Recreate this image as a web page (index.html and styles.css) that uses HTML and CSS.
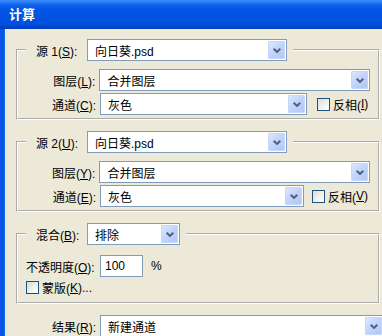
FILE: index.html
```html
<!DOCTYPE html>
<html lang="zh-CN">
<head>
    <meta charset="UTF-8">
    <meta name="viewport" content="width=device-width, initial-scale=1.0">
    <title>计算</title>
    <link rel="stylesheet" href="styles.css">
</head>
<body>

<div class="window">
    <div class="titlebar">计算</div>

    <div class="frame">
        <div class="content">

            <fieldset class="group">
                <legend class="group-head">
                    <span class="head-label">源 1(<u>S</u>):</span>
                    <div class="combo combo-src">
                        <span class="combo-text">向日葵.psd</span>
                        <span class="combo-btn"><svg width="8" height="5" viewBox="0 0 8 5"><polyline points="0.7,0.7 4,4 7.3,0.7" /></svg></span>
                    </div>
                </legend>
                <div class="row">
                    <span class="row-label">图层(<u>L</u>):</span>
                    <div class="combo combo-wide">
                        <span class="combo-text">合并图层</span>
                        <span class="combo-btn"><svg width="8" height="5" viewBox="0 0 8 5"><polyline points="0.7,0.7 4,4 7.3,0.7" /></svg></span>
                    </div>
                </div>
                <div class="row">
                    <span class="row-label">通道(<u>C</u>):</span>
                    <div class="combo combo-chan">
                        <span class="combo-text">灰色</span>
                        <span class="combo-btn"><svg width="8" height="5" viewBox="0 0 8 5"><polyline points="0.7,0.7 4,4 7.3,0.7" /></svg></span>
                    </div>
                    <label class="check check-invert"><span class="check-box"></span>反相(<u>I</u>)</label>
                </div>
            </fieldset>

            <fieldset class="group">
                <legend class="group-head">
                    <span class="head-label">源 2(<u>U</u>):</span>
                    <div class="combo combo-src">
                        <span class="combo-text">向日葵.psd</span>
                        <span class="combo-btn"><svg width="8" height="5" viewBox="0 0 8 5"><polyline points="0.7,0.7 4,4 7.3,0.7" /></svg></span>
                    </div>
                </legend>
                <div class="row">
                    <span class="row-label">图层(<u>Y</u>):</span>
                    <div class="combo combo-wide">
                        <span class="combo-text">合并图层</span>
                        <span class="combo-btn"><svg width="8" height="5" viewBox="0 0 8 5"><polyline points="0.7,0.7 4,4 7.3,0.7" /></svg></span>
                    </div>
                </div>
                <div class="row">
                    <span class="row-label">通道(<u>E</u>):</span>
                    <div class="combo combo-chan2">
                        <span class="combo-text">灰色</span>
                        <span class="combo-btn"><svg width="8" height="5" viewBox="0 0 8 5"><polyline points="0.7,0.7 4,4 7.3,0.7" /></svg></span>
                    </div>
                    <label class="check check-invert2"><span class="check-box"></span>反相(<u>V</u>)</label>
                </div>
            </fieldset>

            <fieldset class="group group-blend">
                <legend class="group-head">
                    <span class="head-label">混合(<u>B</u>):</span>
                    <div class="combo combo-blend">
                        <span class="combo-text">排除</span>
                        <span class="combo-btn"><svg width="8" height="5" viewBox="0 0 8 5"><polyline points="0.7,0.7 4,4 7.3,0.7" /></svg></span>
                    </div>
                </legend>
                <div class="row row-opacity">
                    <span class="row-label row-label-left">不透明度(<u>O</u>):</span>
                    <div class="text-input">100</div>
                    <span class="unit">%</span>
                </div>
                <label class="check check-mask"><span class="check-box"></span>蒙版(<u>K</u>)...</label>
            </fieldset>

            <div class="row row-result">
                <span class="row-label">结果(<u>R</u>):</span>
                <div class="combo combo-result">
                    <span class="combo-text">新建通道</span>
                    <span class="combo-btn"><svg width="8" height="5" viewBox="0 0 8 5"><polyline points="0.7,0.7 4,4 7.3,0.7" /></svg></span>
                </div>
            </div>

        </div>
    </div>
</div>

</body>
</html>
```

FILE: styles.css
```css
body {
    margin: 0;
    padding: 0;
    background-color: #ECE9D8;
    font-family: 'Liberation Sans', 'Noto Sans CJK SC', sans-serif;
    font-size: 12px;
    color: #000;
    overflow: hidden;
}

.window {
    width: 382px;
    height: 336px;
    display: flex;
    flex-direction: column;
    overflow: hidden;
}

.titlebar {
    height: 29px;
    line-height: 29px;
    padding-left: 9px;
    color: #fff;
    font-size: 13px;
    font-weight: bold;
    background: linear-gradient(to bottom, #3a8cf8 0px, #2a7ef6 2px, #0d62ea 5px, #0055e5 9px, #0052e0 18px, #0050de 24px, #0045cc 27px, #003cb4 29px);
}

.frame {
    flex: 1;
    display: flex;
    border-left: 4px solid #0a55e5;
    box-shadow: inset 1px 0 0 #166aee;
}

.content {
    flex: 1;
    padding-top: 10px;
}

/* group boxes */
.group {
    box-sizing: border-box;
    width: 364px;
    min-width: 0;
    margin: 0 0 11px 12px;
    padding: 8px 8px 3px 8px;
    border: 2px groove #fff;
}

.group-blend {
    padding-top: 10px;
    padding-bottom: 0;
}

.group-head {
    display: flex;
    align-items: center;
    padding: 0 6px 0 10px;
}

.head-label {
    width: 46px;
    margin-right: 5px;
    white-space: nowrap;
}

.row {
    display: flex;
    align-items: center;
    height: 22px;
    margin-bottom: 2px;
}

.row:last-child {
    margin-bottom: 0;
}

.row-label {
    width: 70px;
    margin-right: 4px;
    text-align: right;
    white-space: nowrap;
}

.row-label-left {
    text-align: left;
}

/* combo boxes */
.combo {
    box-sizing: border-box;
    height: 22px;
    display: flex;
    align-items: center;
    background-color: #fff;
    border: 1px solid #7F9DB9;
    padding: 1px;
}

.combo-text {
    flex: 1;
    padding-left: 6px;
    white-space: nowrap;
}

.combo-btn {
    box-sizing: border-box;
    width: 17px;
    height: 18px;
    display: flex;
    align-items: center;
    justify-content: center;
    border: 1px solid #c6d6fc;
    border-radius: 1px;
    background: linear-gradient(135deg, #dde7fe 0%, #c4d5fb 45%, #b2c6f5 100%);
}

.combo-btn polyline {
    fill: none;
    stroke: #4d6185;
    stroke-width: 2;
}

.combo-src { width: 200px; }
.combo-wide { width: 273px; }
.combo-chan { width: 207px; }
.combo-chan2 { width: 204px; }
.combo-blend { width: 93px; }
.combo-result { width: 284px; }

/* checkboxes */
.check {
    display: flex;
    align-items: center;
    white-space: nowrap;
}

.check-box {
    box-sizing: border-box;
    width: 13px;
    height: 13px;
    margin-right: 3px;
    border: 1px solid #1C5180;
    background: linear-gradient(135deg, #dcdcd7 0%, #f2f2ee 60%, #fff 100%);
}

.check-invert { margin-left: 10px; }
.check-invert2 { margin-left: 8px; }

.check-mask {
    height: 17px;
    padding-bottom: 6px;
}

.text-input {
    box-sizing: border-box;
    width: 43px;
    height: 22px;
    line-height: 20px;
    padding-left: 4px;
    background-color: #fff;
    border: 1px solid #7F9DB9;
}

.unit {
    margin-left: 8px;
}

.row-result {
    padding-left: 22px;
}
```
